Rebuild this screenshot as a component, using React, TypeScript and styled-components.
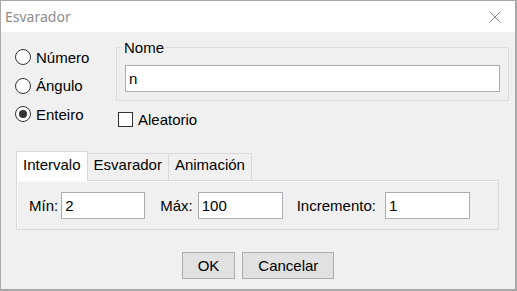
import React from "react"
import { createGlobalStyle, styled } from "styled-components"

const GlobalStyle = createGlobalStyle`
  html, body {
    margin: 0;
    padding: 0;
    background: #fff;
  }
  body {
    font-family: "Liberation Sans", Arial, sans-serif;
    font-size: 15px;
    color: #000;
  }
`

const Window = styled.div`
  width: 517px;
  height: 291px;
  box-sizing: border-box;
  border: 1px solid #a8a8a8;
  border-right-width: 2px;
  border-bottom-width: 2px;
  display: flex;
  flex-direction: column;
  background: #f0f0f0;
`

const TitleBar = styled.div`
  height: 31px;
  flex: none;
  background: #fff;
  display: flex;
  align-items: center;
  justify-content: space-between;
  padding: 0 14px 0 4px;
`

const Title = styled.span`
  font-family: "Noto Sans", "Open Sans", sans-serif;
  font-size: 14px;
  color: #8c8c8c;
`

const Body = styled.div`
  flex: 1;
  display: flex;
  flex-direction: column;
`

const TopRow = styled.div`
  display: flex;
  align-items: flex-start;
  padding-left: 14px;
`

const RadioColumn = styled.div`
  width: 101px;
  padding-top: 11px;
  display: grid;
  grid-auto-rows: 28px;
  row-gap: 0.5px;
`

const RadioRow = styled.label`
  display: flex;
  align-items: center;
  gap: 5px;
  line-height: 17px;
`

const RadioCircle = styled.span<{ $checked?: boolean }>`
  width: 16px;
  height: 16px;
  box-sizing: border-box;
  border: 1px solid #333;
  border-radius: 50%;
  background: #fff;
  display: flex;
  align-items: center;
  justify-content: center;

  &::after {
    content: "";
    width: 8px;
    height: 8px;
    border-radius: 50%;
    background: #333;
    display: ${({ $checked }) => ($checked ? "block" : "none")};
  }
`

const RightColumn = styled.div`
  width: 393px;
  padding-top: 7px;
`

const Group = styled.fieldset`
  margin: 0;
  padding: 9px 8px 8px;
  border: 1px solid #dcdcdc;
  min-width: 0;
`

const Legend = styled.legend`
  padding: 0 2px;
  margin-left: -3px;
  line-height: 17px;
`

const TextField = styled.div<{ $width?: number }>`
  width: ${({ $width }) => ($width ? `${$width}px` : "100%")};
  height: 27px;
  box-sizing: border-box;
  border: 1px solid #abadb3;
  background: #fff;
  padding-left: 3px;
  display: flex;
  align-items: center;
  line-height: 17px;
`

const CheckRow = styled.label`
  margin-top: 9px;
  height: 18px;
  padding-left: 2px;
  display: flex;
  align-items: center;
  gap: 5px;
  line-height: 17px;
`

const CheckBox = styled.span`
  width: 15px;
  height: 15px;
  box-sizing: border-box;
  border: 1px solid #333;
  background: #fff;
`

const Tabs = styled.div`
  margin: 23px 0 0 15px;
  width: 483px;
`

const TabStrip = styled.div`
  display: flex;
  align-items: flex-end;
  height: 29px;
`

const Tab = styled.div<{ $active?: boolean }>`
  position: relative;
  z-index: ${({ $active }) => ($active ? 1 : 0)};
  box-sizing: border-box;
  height: ${({ $active }) => ($active ? 30 : 27)}px;
  margin-bottom: ${({ $active }) => ($active ? -1 : 0)}px;
  padding: ${({ $active }) => ($active ? "4px 6px 0" : "2px 6px 0")};
  border: 1px solid #d9d9d9;
  border-bottom: none;
  background: ${({ $active }) => ($active ? "#fff" : "#f0f0f0")};
  line-height: 17px;

  & + & {
    margin-left: ${({ $active }) => ($active ? 0 : -1)}px;
  }
`

const Panel = styled.div`
  box-sizing: border-box;
  height: 50px;
  border: 1px solid #d9d9d9;
  box-shadow: inset 1px 1px 0 #fafafa;
  background: #f0f0f0;
  padding: 0 12px;
  display: flex;
  align-items: center;
`

const Field = styled.label<{ $lead: number; $gap: number }>`
  display: flex;
  align-items: center;
  margin-left: ${({ $lead }) => $lead}px;
  gap: ${({ $gap }) => $gap}px;
  line-height: 17px;
`

const ButtonRow = styled.div`
  margin-top: 22px;
  display: flex;
  justify-content: center;
  gap: 7px;
`

const Button = styled.button`
  height: 27px;
  padding: 0 15px;
  border: 1px solid #adadad;
  background: #e1e1e1;
  font-family: "Liberation Sans", Arial, sans-serif;
  font-size: 15px;
  color: #000;
  line-height: 17px;
`

const CloseIcon = () => (
  <svg width="12" height="12" viewBox="0 0 12 12">
    <path d="M0.5 0.5 L11.5 11.5 M11.5 0.5 L0.5 11.5" stroke="#888" strokeWidth="1" />
  </svg>
)

const kinds = [
  { label: "Número", checked: false },
  { label: "Ángulo", checked: false },
  { label: "Enteiro", checked: true },
]

const tabs = ["Intervalo", "Esvarador", "Animación"]

const App: React.FC = () => {
  return (
    <>
      <GlobalStyle />
      <Window>
        <TitleBar>
          <Title>Esvarador</Title>
          <CloseIcon />
        </TitleBar>
        <Body>
          <TopRow>
            <RadioColumn>
              {kinds.map((k) => (
                <RadioRow key={k.label}>
                  <RadioCircle $checked={k.checked} />
                  {k.label}
                </RadioRow>
              ))}
            </RadioColumn>
            <RightColumn>
              <Group>
                <Legend>Nome</Legend>
                <TextField>n</TextField>
              </Group>
              <CheckRow>
                <CheckBox />
                Aleatorio
              </CheckRow>
            </RightColumn>
          </TopRow>

          <Tabs>
            <TabStrip>
              {tabs.map((t, i) => (
                <Tab key={t} $active={i === 0}>
                  {t}
                </Tab>
              ))}
            </TabStrip>
            <Panel>
              <Field $lead={0} $gap={3}>
                Mín:
                <TextField $width={84}>2</TextField>
              </Field>
              <Field $lead={15} $gap={5}>
                Máx:
                <TextField $width={85}>100</TextField>
              </Field>
              <Field $lead={14} $gap={9}>
                Incremento:
                <TextField $width={85}>1</TextField>
              </Field>
            </Panel>
          </Tabs>

          <ButtonRow>
            <Button>OK</Button>
            <Button>Cancelar</Button>
          </ButtonRow>
        </Body>
      </Window>
    </>
  )
}

export default App
